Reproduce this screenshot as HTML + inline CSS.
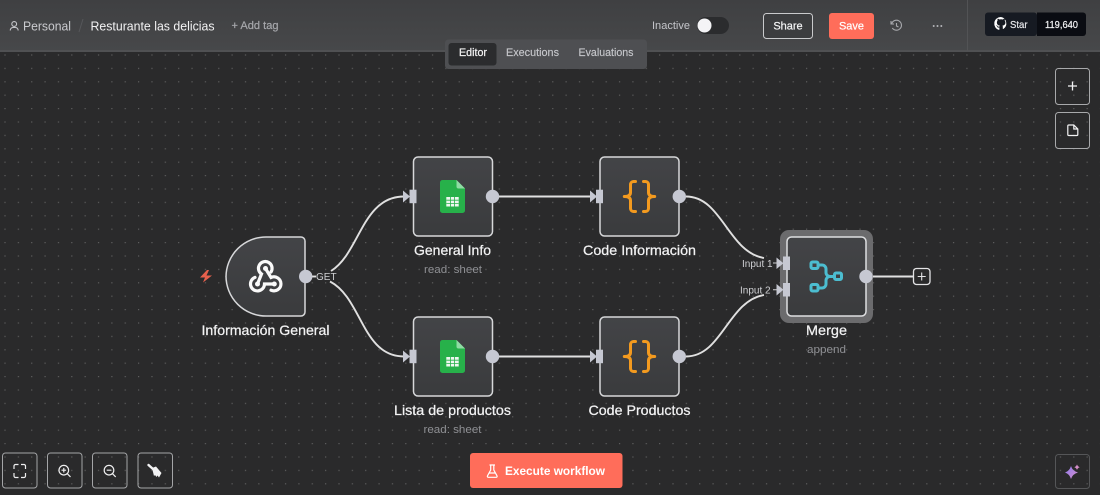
<!DOCTYPE html>
<html><head><meta charset="utf-8">
<style>
html,body{margin:0;padding:0;width:1100px;height:495px;overflow:hidden;background:#2a2a2b}
body{font-family:"Liberation Sans",sans-serif;position:relative}
svg text{font-family:"Liberation Sans",sans-serif}
</style></head>
<body>
<svg width="1100" height="495" viewBox="0 0 1100 495" style="position:absolute;left:0;top:0">
<defs>
<pattern id="dots" x="4.4" y="54.4" width="13.36" height="13.4" patternUnits="userSpaceOnUse"><rect width="1.2" height="1.2" fill="#5e5e5e"/></pattern>
<linearGradient id="nb" x1="0" y1="0" x2="0" y2="1"><stop offset="0" stop-color="#434447"/><stop offset="1" stop-color="#3a3b3d"/></linearGradient>
<linearGradient id="hd" x1="0" y1="0" x2="0" y2="1"><stop offset="0" stop-color="#3f4042"/><stop offset="1" stop-color="#47484a"/></linearGradient>
<linearGradient id="sp" x1="0" y1="0" x2="1" y2="1"><stop offset="0" stop-color="#8f7cf0"/><stop offset="1" stop-color="#d48dc8"/></linearGradient>
<g id="sheet">
<path d="M-10.5,-16.5 H4 L12.500,-8 V14 a2.500,2.500 0 0 1 -2.500,2.500 H-10 a2.500,2.500 0 0 1 -2.500,-2.500 V-14 a2.500,2.500 0 0 1 2.500,-2.500Z" fill="#27b14a"/>
<path d="M4,-16.5 L12.500,-8 H6 a2,2 0 0 1 -2,-2Z" fill="#8fdca3"/>
<rect x="-6.200" y="0.500" width="12.400" height="9.500" fill="#eef7f0"/>
<path d="M-6.200,3.700H6.200M-6.200,6.900H6.200M-2,0.500V10M2,0.500V10" stroke="#27b14a" stroke-width=".8"/>
</g>
<g id="code" fill="none" stroke="#f39a1f" stroke-width="3" stroke-linecap="round" stroke-linejoin="round">
<path d="M-4,-15 H-6 a3,3 0 0 0 -3,3 V-4 q0,4 -6.200,4 q6.200,0 6.200,4 V12 a3,3 0 0 0 3,3 H-4"/>
<path d="M4,-15 H6 a3,3 0 0 1 3,3 V-4 q0,4 6.200,4 q-6.200,0 -6.200,4 V12 a3,3 0 0 1 -3,3 H4"/>
</g>
</defs>

<!-- canvas -->
<rect width="1100" height="495" fill="#2a2a2b"/>
<rect y="52" width="1100" height="443" fill="url(#dots)"/>

<!-- header -->
<rect width="1100" height="51" fill="url(#hd)"/>
<rect y="50" width="1100" height="2" fill="#505153"/>
<rect x="967" width="1" height="51" fill="#525355"/>
<g fill="none" stroke="#c4c5c9" stroke-width="1.100"><circle cx="14.200" cy="24" r="2.400"/><path d="M10.300,30.500 v-.6 a3,3 0 0 1 3,-2.400 h1.800 a3,3 0 0 1 3,2.400 v.6"/></g>
<text x="23" y="30.500" font-size="13" fill="#c9cace" textLength="48" lengthAdjust="spacingAndGlyphs">Personal</text>
<path d="M79,32 L83,19" stroke="#56575a" stroke-width="1"/>
<text x="90.500" y="30.500" font-size="13" fill="#f2f2f3" textLength="124" lengthAdjust="spacingAndGlyphs">Resturante las delicias</text>
<text x="231.500" y="29" font-size="11" fill="#a6a7ab" stroke="#a6a7ab" stroke-width=".2" textLength="47" lengthAdjust="spacingAndGlyphs">+ Add tag</text>

<text x="652" y="29" font-size="11" fill="#c4c5ca" textLength="38" lengthAdjust="spacingAndGlyphs">Inactive</text>
<rect x="697" y="17" width="32" height="17" rx="8.500" fill="#2b2c2e"/>
<circle cx="704.500" cy="25.500" r="7" fill="#f4f4f6"/>
<rect x="763.500" y="13.500" width="49" height="25" rx="3" fill="#3c3d3f" stroke="#c9cacc" stroke-width="1"/>
<text x="788" y="29.500" font-size="11" fill="#f4f4f5" text-anchor="middle" stroke="#f4f4f5" stroke-width=".2">Share</text>
<rect x="829" y="13" width="45" height="26" rx="3" fill="#ff6d5a"/>
<text x="851.500" y="29.500" font-size="11" fill="#fff" text-anchor="middle" stroke="#fff" stroke-width=".2">Save</text>
<g fill="none" stroke="#a8a9ad" stroke-width="1.100"><path d="M891.600,24 a5,5 0 1 1 .7,4"/><path d="M891,21 v3 h3"/><path d="M896.500,23 v3 l2,1"/></g>
<g fill="#b4b5b9"><circle cx="933.700" cy="26" r="1"/><circle cx="937.500" cy="26" r="1"/><circle cx="941.300" cy="26" r="1"/></g>
<rect x="985" y="12.500" width="52" height="23.500" rx="3" fill="#161a22"/>
<path d="M1037,12.500 h46 a3,3 0 0 1 3,3 v17.500 a3,3 0 0 1 -3,3 h-46Z" fill="#0a0c12"/>
<path d="M1001,17 a6.600,6.600 0 0 0 -2.100,12.900 c.3,0 .5,-.2 .5,-.4 v-2 c-1.800,.4 -2.200,-.8 -2.200,-.8 c-.3,-.8 -.7,-1 -.7,-1 c-.6,-.4 0,-.4 0,-.4 c.7,0 1,.7 1,.7 c.6,1 1.600,.7 2,.5 c.1,-.4 .2,-.7 .4,-.9 c-1.500,-.2 -3,-.7 -3,-3.200 c0,-.7 .2,-1.300 .7,-1.800 c-.1,-.2 -.3,-.8 .1,-1.800 c0,0 .6,-.2 1.800,.7 a6.300,6.300 0 0 1 3.300,0 c1.300,-.9 1.800,-.7 1.800,-.7 c.4,1 .1,1.600 .1,1.800 c.4,.5 .7,1.100 .7,1.800 c0,2.500 -1.500,3 -3,3.200 c.2,.2 .4,.6 .4,1.200 v1.800 c0,.2 .1,.4 .5,.4 A6.600,6.600 0 0 0 1001,17Z" fill="#fff"/>
<text x="1010" y="28" font-size="10.500" fill="#e6e7ea" stroke="#e6e7ea" stroke-width=".2" textLength="17.500" lengthAdjust="spacingAndGlyphs">Star</text>
<text x="1045" y="28" font-size="10.500" fill="#f4f4f6" stroke="#f4f4f6" stroke-width=".2" textLength="33" lengthAdjust="spacingAndGlyphs">119,640</text>

<!-- tabs -->
<rect x="445" y="39.500" width="202" height="29.500" rx="3.500" fill="#4e4f52"/>
<rect x="448.500" y="43" width="48" height="22.500" rx="3" fill="#2b2c2e"/>
<text x="459" y="56" font-size="11" fill="#f1f1f2" stroke="#f1f1f2" stroke-width=".25" textLength="28" lengthAdjust="spacingAndGlyphs">Editor</text>
<text x="506" y="56" font-size="11" fill="#c6c7cb" stroke="#c6c7cb" stroke-width=".15" textLength="53" lengthAdjust="spacingAndGlyphs">Executions</text>
<text x="578.500" y="56" font-size="11" fill="#c6c7cb" stroke="#c6c7cb" stroke-width=".15" textLength="55" lengthAdjust="spacingAndGlyphs">Evaluations</text>

<!-- right tools -->
<g fill="none" stroke="#a8a9ab" stroke-width="1">
<rect x="1055.500" y="68.500" width="34" height="36" rx="3"/>
<rect x="1055.500" y="112.500" width="34" height="36" rx="3"/>
</g>
<path d="M1072.500,81.500 v9 M1068,86 h9" stroke="#f2f2f3" stroke-width="1.300"/>
<path d="M1067.800,126 a1,1 0 0 1 1,-1 h5 l4,4 v5.500 a1,1 0 0 1 -1,1 h-8 a1,1 0 0 1 -1,-1Z M1073.800,125 v4 h4" fill="none" stroke="#f2f2f3" stroke-width="1.200"/>

<!-- edges -->
<g fill="none" stroke="#e0e0e0" stroke-width="1.900">
<path d="M311,276.500 H316"/>
<path d="M331,271 C360,253 362,196.500 404,196.500"/>
<path d="M330,281.500 C362,298 362,356.500 404,356.500"/>
<path d="M499,196.500 H591"/>
<path d="M499,356.500 H591"/>
<path d="M686,196.500 C722,196.500 728,252 764,258"/>
<path d="M686,356.500 C722,356.500 728,301 764,295"/>
<path d="M872,276.500 H913"/>
</g>
<text x="316" y="280" font-size="10" fill="#cfd0d3">GET</text>

<!-- nodes -->
<g fill="url(#nb)" stroke="#d7d8da" stroke-width="1.500">
<path d="M266,237 H301 a4,4 0 0 1 4,4 V312 a4,4 0 0 1 -4,4 H266 a40,40 0 0 1 -40,-40 V277 a40,40 0 0 1 40,-40Z"/>
<rect x="413.500" y="157" width="79" height="79" rx="4.500"/>
<rect x="413.500" y="317" width="79" height="79" rx="4.500"/>
<rect x="600" y="157" width="79" height="79" rx="4.500"/>
<rect x="600" y="317" width="79" height="79" rx="4.500"/>
</g>
<rect x="780" y="230" width="93" height="93" rx="9" fill="#6b6b6d"/>
<rect x="787" y="237" width="79" height="79" rx="4.500" fill="url(#nb)" stroke="#dedfe1" stroke-width="1.500"/>

<!-- webhook icon -->
<g fill="none" stroke="#fafafa" stroke-width="3.200" stroke-linecap="round">
<path d="M257.500,284 L261.500,274 A6.800,6.800 0 1 1 271,272"/>
<path d="M265.500,268.500 L271,277.500 A7,7 0 1 1 271,290.200"/>
<path d="M274.300,284 H264.500 A7,7 0 1 1 255,277.400"/>
</g>
<g fill="#fafafa"><circle cx="265.500" cy="268.500" r="2.500"/><circle cx="257.500" cy="284" r="2.500"/><circle cx="274.300" cy="284" r="2.500"/></g>
<path d="M207,270 L200,277.500 H205 L203,282.500 L212,275.500 H206.500 L209,270Z" fill="#e8604c"/>

<use href="#sheet" x="452.500" y="196.500"/>
<use href="#sheet" x="452.500" y="356.500"/>
<use href="#code" x="639.500" y="196.500"/>
<use href="#code" x="639.500" y="356.500"/>

<!-- merge icon -->
<g fill="none" stroke="#4cbdd0" stroke-width="3">
<rect x="811" y="262" width="7" height="6.500" rx="1.500"/>
<rect x="811" y="284.500" width="7" height="6.500" rx="1.500"/>
<rect x="834.500" y="273" width="7" height="6.500" rx="1.500"/>
<path d="M818.500,265 H822 a4,4 0 0 1 4,4 V272.500 a4,4 0 0 0 4,4 H834"/>
<path d="M818.500,288 H822 a4,4 0 0 0 4,-4 V280.500 a4,4 0 0 1 4,-4"/>
</g>

<!-- ports -->
<g fill="#c6c8d2">
<circle cx="305.700" cy="276.500" r="6.700"/>
<circle cx="492.500" cy="196.500" r="6.700"/>
<circle cx="492.500" cy="356.500" r="6.700"/>
<circle cx="679.300" cy="196.500" r="6.700"/>
<circle cx="679.300" cy="356.500" r="6.700"/>
<circle cx="866" cy="276.500" r="6.700"/>
<rect x="409.500" y="189.700" width="7" height="13.500"/>
<rect x="409.500" y="349.700" width="7" height="13.500"/>
<rect x="596" y="189.700" width="7" height="13.500"/>
<rect x="596" y="349.700" width="7" height="13.500"/>
<rect x="783" y="256.500" width="7" height="13.500"/>
<rect x="783" y="283" width="7" height="13.500"/>
<path d="M403,190.500 L410,196.500 L403,202.500Z M403,350.500 L410,356.500 L403,362.500Z M590,190.500 L597,196.500 L590,202.500Z M590,350.500 L597,356.500 L590,362.500Z M776.500,257.500 L783.500,263.300 L776.500,269Z M776.500,284 L783.500,289.800 L776.500,295.500Z"/>
</g>

<text x="742" y="267" font-size="10" fill="#cfd0d3">Input 1</text>
<text x="740" y="293.500" font-size="10" fill="#cfd0d3">Input 2</text>
<path d="M773,263 h4 M773,289.800 h4" stroke="#cfd0d3" stroke-width="1"/>

<rect x="913.500" y="268.500" width="16.500" height="16" rx="3" fill="#2a2a2b" stroke="#e3e3e5" stroke-width="1.300"/>
<path d="M921.700,272.500 v8 M917.700,276.500 h8" stroke="#e3e3e5" stroke-width="1.100"/>

<!-- labels -->
<g font-size="14" fill="#f2f2f3" stroke="#f2f2f3" stroke-width=".25" text-anchor="middle">
<text x="265.500" y="335" textLength="128" lengthAdjust="spacingAndGlyphs">Información General</text>
<text x="452.500" y="255" textLength="77" lengthAdjust="spacingAndGlyphs">General Info</text>
<text x="639.500" y="255" textLength="113" lengthAdjust="spacingAndGlyphs">Code Información</text>
<text x="826.500" y="335" textLength="41" lengthAdjust="spacingAndGlyphs">Merge</text>
<text x="452.500" y="415" textLength="117" lengthAdjust="spacingAndGlyphs">Lista de productos</text>
<text x="639.500" y="415" textLength="102" lengthAdjust="spacingAndGlyphs">Code Productos</text>
</g>
<g font-size="11" fill="#8f9094" text-anchor="middle">
<text x="453" y="273" textLength="58" lengthAdjust="spacingAndGlyphs">read: sheet</text>
<text x="826.500" y="353" textLength="39" lengthAdjust="spacingAndGlyphs">append</text>
<text x="452.500" y="433" textLength="58" lengthAdjust="spacingAndGlyphs">read: sheet</text>
</g>

<!-- bottom tools -->
<g fill="none" stroke="#a4a5a7" stroke-width="1">
<rect x="2.500" y="453" width="34.500" height="35" rx="3"/>
<rect x="47.500" y="453" width="34.500" height="35" rx="3"/>
<rect x="92.500" y="453" width="34.500" height="35" rx="3"/>
<rect x="138" y="453" width="34.500" height="35" rx="3"/>
</g>
<path d="M14,469 v-3 a1.500,1.500 0 0 1 1.500,-1.500 h3 M21,464.500 h3 a1.500,1.500 0 0 1 1.500,1.500 v3 M25.500,473 v3 a1.500,1.500 0 0 1 -1.500,1.500 h-3 M18.500,477.500 h-3 a1.500,1.500 0 0 1 -1.500,-1.500 v-3" fill="none" stroke="#eeeeef" stroke-width="1.200"/>
<g fill="none" stroke="#eeeeef" stroke-width="1.200">
<circle cx="63.800" cy="470.200" r="4.800"/><path d="M67.300,473.700 l3.200,3.200 M61.500,470.200 h4.600 M63.800,467.900 v4.600"/>
<circle cx="109" cy="470.200" r="4.800"/><path d="M112.500,473.700 l3.200,3.200 M106.700,470.200 h4.600"/>
</g>
<path d="M148.500,465 L153,469" stroke="#f2f2f3" stroke-width="2.400" stroke-linecap="round"/>
<path d="M152,468 L156,466.500 L161.500,473 L159,477.500 L157.500,475.500 L156.500,477 L155,475 L154,476Z" fill="#f2f2f3"/>

<rect x="470" y="453" width="152.500" height="35" rx="3" fill="#ff6d5a"/>
<path d="M489.500,465 h5.500 M490.700,465 v5 l-3.200,5.800 a1,1 0 0 0 1,1.500 h7.500 a1,1 0 0 0 1,-1.500 l-3.200,-5.800 v-5 M488.700,473 h7" fill="none" stroke="#fff" stroke-width="1.200"/>
<text x="505" y="475" font-size="12" font-weight="700" fill="#fff" textLength="100" lengthAdjust="spacingAndGlyphs">Execute workflow</text>

<rect x="1055.500" y="454.500" width="34" height="34" rx="3" fill="none" stroke="#555658" stroke-width="1"/>
<path d="M1071,466 Q1072.500,471 1078,472.500 Q1072.500,474 1071,479 Q1069.500,474 1065,472.500 Q1069.500,471 1071,466Z" fill="url(#sp)"/>
<path d="M1077,464.500 Q1077.700,466.500 1079.700,467.200 Q1077.700,467.900 1077,469.900 Q1076.300,467.900 1074.300,467.200 Q1076.300,466.500 1077,464.500Z" fill="#d48dc8"/>
</svg>
</body></html>
